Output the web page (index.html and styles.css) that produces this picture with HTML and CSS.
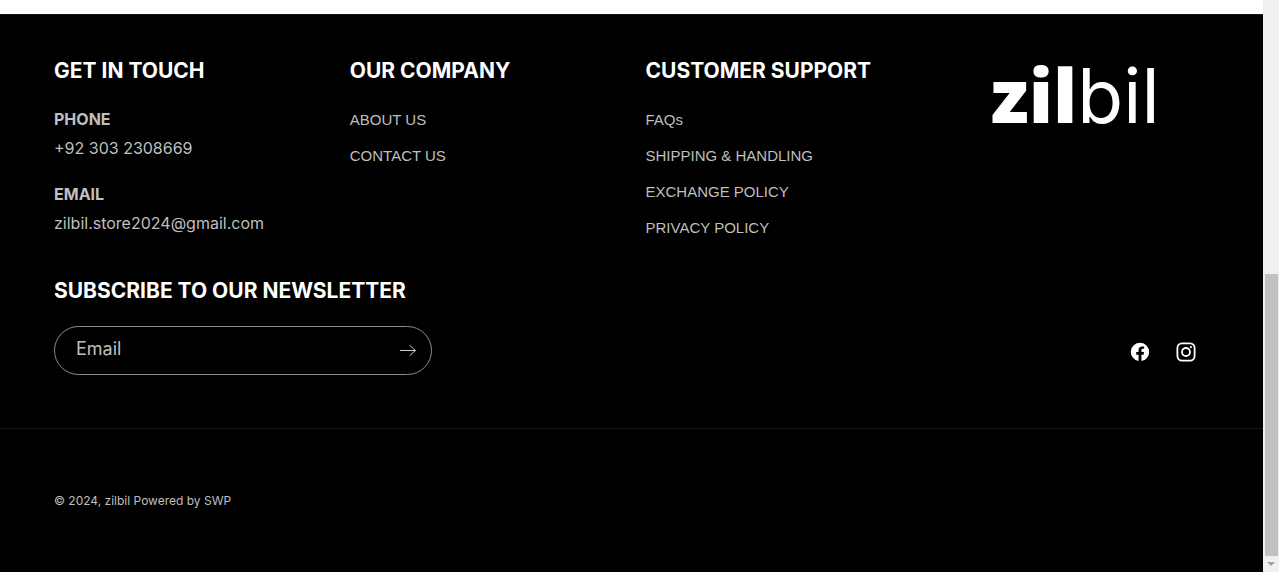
FILE: index.html
```html
<!DOCTYPE html>
<html lang="en">
<head>
<meta charset="utf-8">
<meta name="viewport" content="width=device-width, initial-scale=1">
<title>zilbil</title>
<link rel="stylesheet" href="styles.css">
</head>
<body>
<div class="page">
  <footer class="footer">
    <div class="footer-top">
      <div class="columns">
        <section>
          <h2 class="heading">GET IN TOUCH</h2>
          <p class="contact"><strong>PHONE</strong><br>+92 303 2308669</p>
          <p class="contact"><strong>EMAIL</strong><br>zilbil.store2024@gmail.com</p>
        </section>
        <nav aria-label="Our company">
          <h2 class="heading">OUR COMPANY</h2>
          <ul class="links">
            <li><a href="#">ABOUT US</a></li>
            <li><a href="#">CONTACT US</a></li>
          </ul>
        </nav>
        <nav aria-label="Customer support">
          <h2 class="heading">CUSTOMER SUPPORT</h2>
          <ul class="links">
            <li><a href="#">FAQs</a></li>
            <li><a href="#">SHIPPING &amp; HANDLING</a></li>
            <li><a href="#">EXCHANGE POLICY</a></li>
            <li><a href="#">PRIVACY POLICY</a></li>
          </ul>
        </nav>
        <div class="logo"><b>zil</b><span>bil</span></div>
      </div>
      <div class="signup-row">
        <form class="signup">
          <label class="heading" for="email">SUBSCRIBE TO OUR NEWSLETTER</label>
          <div class="field">
            <input id="email" type="email" placeholder="Email">
            <button type="button" aria-label="Subscribe">
              <svg viewBox="0 0 16 12" width="16" height="12" fill="none" stroke="currentColor" stroke-linecap="round" stroke-linejoin="round"><path d="M.5 5.5h14.8M10 .5l5.3 5-5.3 5"/></svg>
            </button>
          </div>
        </form>
        <div class="social">
          <a href="#" aria-label="Facebook">
            <svg viewBox="0 0 20 20" width="20" height="20" fill="currentColor"><path d="M19.2 10A9.2 9.2 0 1 0 8.56 19.09v-6.43H6.23V10h2.33V7.97c0-2.3 1.38-3.58 3.48-3.58 1 0 2.05.18 2.05.18v2.27h-1.15c-1.15 0-1.5.7-1.5 1.43V10h2.56l-.4 2.66h-2.16v6.43A9.2 9.2 0 0 0 19.2 10Z"/></svg>
          </a>
          <a href="#" aria-label="Instagram">
            <svg viewBox="0 0 20 20" width="20" height="20" fill="none" stroke="currentColor" stroke-width="1.8"><rect x="1.4" y="1.4" width="17.2" height="17.2" rx="4.6"/><circle cx="10" cy="10" r="4"/><circle cx="14.9" cy="5.1" r="1.1" fill="currentColor" stroke="none"/></svg>
          </a>
        </div>
      </div>
    </div>
    <div class="footer-bottom"><small>© 2024, <a href="#">zilbil</a> <a href="#">Powered by SWP</a></small></div>
  </footer>
  <div class="scrollbar" aria-hidden="true">
    <div class="thumb"></div>
    <svg viewBox="0 0 16 16" width="16" height="16"><path d="M4 6h8l-4 4z" fill="#a0a0a0"/></svg>
  </div>
</div>
</body>
</html>
```
FILE: styles.css
```css
* { box-sizing: border-box; }
body {
  margin: 0;
  background: #fff;
  color: #bfbfbf;
  font-family: Inter, "Liberation Sans", sans-serif;
}
a { color: inherit; text-decoration: none; }
.page { display: flex; min-height: 100vh; }
.footer {
  flex: 1;
  display: flex;
  flex-direction: column;
  margin-top: 14px;
  background: #000;
  border-top: 1px solid #141414;
}
.footer-top { padding: 42px 54px 53px; }
.columns {
  display: grid;
  grid-template-columns: repeat(4, 1fr);
  column-gap: 28px;
}
.heading {
  display: block;
  margin: 0;
  color: #fff;
  font-size: 21px;
  font-weight: 700;
  line-height: 28px;
}
.contact {
  margin: 20px 0 16px;
  font-size: 16px;
  line-height: 29px;
}
.contact + .contact { margin-top: 17px; }
.links {
  margin: 17px 0 0;
  padding: 0;
  list-style: none;
  font-family: "Liberation Sans", Arial, sans-serif;
  font-size: 15px;
  line-height: 36px;
}
.logo {
  display: flex;
  align-items: baseline;
  justify-content: center;
  color: #fff;
  font-size: 75px;
  line-height: 75px;
}
.logo b { font-family: "Open Sans", sans-serif; font-weight: 800; }
.logo span { font-weight: 400; }
.signup-row {
  display: flex;
  justify-content: space-between;
  align-items: flex-end;
  margin-top: 23px;
}
.signup { flex: 0 1 378px; }
.field {
  display: flex;
  margin-top: 21px;
  border: 1px solid #8c8c8c;
  border-radius: 25px;
}
.field input {
  flex: 1;
  min-width: 0;
  height: 47px;
  padding: 0 0 4px 21px;
  border: 0;
  outline: 0;
  background: transparent;
  color: #bfbfbf;
  font: 18px Inter, "Liberation Sans", sans-serif;
}
.field input::placeholder { color: #bfbfbf; opacity: 1; }
.field button {
  display: grid;
  place-items: center;
  width: 46px;
  padding: 0;
  border: 0;
  background: transparent;
  color: #cfcfcf;
}
.social { display: flex; gap: 26px; padding: 0 13px 13px 0; color: #fff; }
.social a, .social svg { display: block; }
.footer-bottom {
  flex: 1;
  padding: 64px 54px 48px;
  border-top: 1px solid #141414;
  line-height: 16px;
}
.footer-bottom small { display: block; font-size: 12px; }
.scrollbar {
  display: flex;
  flex-direction: column;
  justify-content: flex-end;
  width: 16px;
  padding: 0 1px 0 2px;
  background: #f0f0f0;
}
.thumb { height: 49.3vh; background: #c1c1c1; }
.scrollbar svg { display: block; margin-left: -2px; }
```
